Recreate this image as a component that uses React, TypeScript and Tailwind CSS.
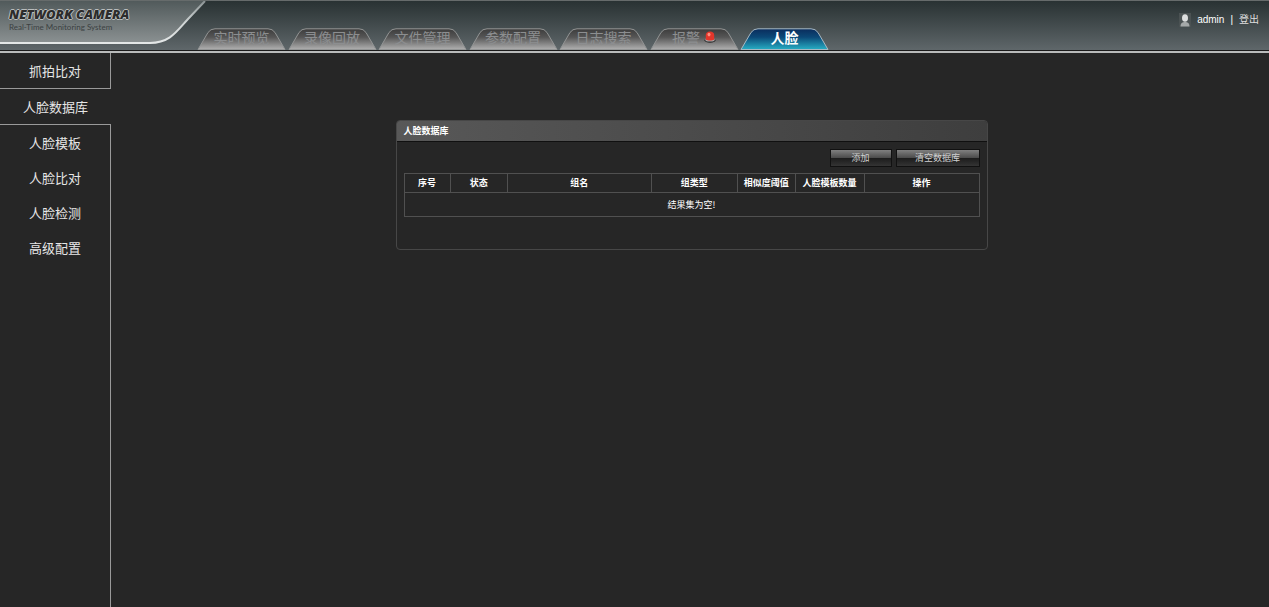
import { useState } from "react";

type MenuId = "capture" | "database" | "template" | "compare" | "detect" | "advanced";

const TABS = [
  { id: "live", label: "实时预览" },
  { id: "playback", label: "录像回放" },
  { id: "files", label: "文件管理" },
  { id: "config", label: "参数配置" },
  { id: "log", label: "日志搜索" },
  { id: "alarm", label: "报警" },
  { id: "face", label: "人脸" },
];

const MENU: { id: MenuId; label: string }[] = [
  { id: "capture", label: "抓拍比对" },
  { id: "database", label: "人脸数据库" },
  { id: "template", label: "人脸模板" },
  { id: "compare", label: "人脸比对" },
  { id: "detect", label: "人脸检测" },
  { id: "advanced", label: "高级配置" },
];

const COLUMNS = [
  { label: "序号", width: "w-[8%]" },
  { label: "状态", width: "w-[10%]" },
  { label: "组名", width: "w-[25%]" },
  { label: "组类型", width: "w-[15%]" },
  { label: "相似度阈值", width: "w-[10%]" },
  { label: "人脸模板数量", width: "w-[12%]" },
  { label: "操作", width: "w-[20%]" },
];

function Logo() {
  return (
    <div className="grid w-[206px] shrink-0">
      <svg viewBox="0 0 206 49" className="col-start-1 row-start-1 h-[49px] w-[206px]" aria-hidden="true">
        <defs>
          <linearGradient id="logo-fill" x1="0" y1="0" x2="0" y2="1">
            <stop offset="0" stopColor="#515a5b" />
            <stop offset="1" stopColor="#8b9192" />
          </linearGradient>
          <linearGradient id="logo-edge" x1="0" y1="1" x2="0" y2="0">
            <stop offset="0" stopColor="#e4e7e7" />
            <stop offset="0.5" stopColor="#cfd4d4" />
            <stop offset="1" stopColor="#8b9394" />
          </linearGradient>
        </defs>
        <path d="M0 0H205L188 18C176 31 170 42 150 42H0Z" fill="url(#logo-fill)" />
        <path d="M0 42H150C170 42 177 30 188 18L205 0" fill="none" stroke="url(#logo-edge)" strokeWidth="2" />
      </svg>
      <div className="col-start-1 row-start-1 pt-[6px] pl-[9px]">
        <div className="font-['Open_Sans',sans-serif] text-[13px] leading-[14px] font-extrabold italic text-[#2c2c2c] [text-shadow:1px_0_#b9bdbd,-1px_0_#b9bdbd,0_1px_#b9bdbd,0_-1px_#b9bdbd]">
          NETWORK CAMERA
        </div>
        <div className="font-['Lato',sans-serif] text-[8px] leading-3 text-[#3b4142]">Real-Time Monitoring System</div>
      </div>
    </div>
  );
}

function TabShape({ active }: { active: boolean }) {
  return (
    <svg viewBox="0 0 89 22" className="col-start-1 row-start-1 h-[22px] w-[89px]" aria-hidden="true">
      <defs>
        <linearGradient id="tab-on" x1="0" y1="0" x2="0" y2="1">
          <stop offset="0" stopColor="#0a2c5c" />
          <stop offset="0.4" stopColor="#0b4877" />
          <stop offset="1" stopColor="#27aec4" />
        </linearGradient>
        <linearGradient id="tab-off" x1="0" y1="0" x2="0" y2="1">
          <stop offset="0" stopColor="#3c3c3c" />
          <stop offset="0.4" stopColor="#555555" />
          <stop offset="1" stopColor="#b0b0b0" />
        </linearGradient>
      </defs>
      <path
        d="M1 21.5L11 4.5Q13.5 .8 18 .8H71Q75.5 .8 78 4.5L88 21.5Z"
        fill={active ? "url(#tab-on)" : "url(#tab-off)"}
        stroke={active ? "#a9b9c3" : "#939595"}
      />
    </svg>
  );
}

function AlarmIcon() {
  return (
    <svg viewBox="0 0 12 12" className="h-3 w-3" aria-hidden="true">
      <ellipse cx="6" cy="9.3" rx="5.5" ry="2.4" fill="#2b2b2b" />
      <ellipse cx="6" cy="8.7" rx="4.8" ry="1.9" fill="#a9a9a9" />
      <path d="M1.8 8.5V4.2C1.800 1.800 3.600.6 6 .6S10.200 1.800 10.200 4.200V8.500C8.500 9.800 3.500 9.800 1.800 8.500Z" fill="#e3362b" />
      <ellipse cx="5" cy="3.6" rx="1.5" ry="1.8" fill="#ff8f80" />
    </svg>
  );
}

function UserIcon() {
  return (
    <svg viewBox="0 0 12 14" className="h-[14px] w-3" aria-hidden="true">
      <rect width="12" height="14" fill="#4b5253" />
      <path d="M1.500 13.500C1.500 10 3.500 9 6 9S10.500 10 10.500 13.500Z" fill="#a5a9a9" />
      <ellipse cx="6" cy="5" rx="3" ry="3.8" fill="#dcdede" />
    </svg>
  );
}

function Header() {
  const [activeTab, setActiveTab] = useState("face");

  return (
    <header className="border-b-2 border-[#b9bbbb]">
      <div className="flex h-[51px] items-stretch border-t border-b border-t-[#666b6b] border-b-[#1a1a1a] bg-linear-to-b from-[#293233] to-[#5f676a]">
        <Logo />
        <nav className="-ml-[9px] flex w-[632px] shrink-0 items-end justify-between">
          {TABS.map((t) => (
            <button key={t.id} onClick={() => setActiveTab(t.id)} className="grid h-[22px] cursor-pointer">
              <TabShape active={activeTab === t.id} />
              <span
                className={`col-start-1 row-start-1 flex h-[18px] items-center justify-center gap-1 text-[14px] leading-[18px] ${
                  activeTab === t.id ? "font-bold text-white" : "text-[#8c8e90]"
                }`}
              >
                {t.label}
                {t.id === "alarm" && <AlarmIcon />}
              </span>
            </button>
          ))}
        </nav>
        <div className="ml-auto flex items-center gap-[6px] pr-[10px] pb-[12px] font-['Liberation_Sans','Noto_Sans_CJK_SC',sans-serif] text-[10px] leading-4 whitespace-nowrap text-white">
          <UserIcon />
          <span>admin</span>
          <span>|</span>
          <a href="#logout" className="text-[#dedede]">登出</a>
        </div>
      </div>
    </header>
  );
}

function Sidebar() {
  const [activeItem, setActiveItem] = useState<MenuId>("database");

  return (
    <nav className="flex w-[111px] shrink-0 flex-col">
      {MENU.map((m) => (
        <button
          key={m.id}
          onClick={() => setActiveItem(m.id)}
          className={`cursor-pointer text-center text-[13px] text-[#e6e6e6] ${
            activeItem === m.id ? "h-[37px] border-y border-[#9a9a9a]" : "h-[35px] border-r border-[#9a9a9a]"
          }`}
        >
          {m.label}
        </button>
      ))}
      <div className="flex-1 border-r border-[#9a9a9a]" />
    </nav>
  );
}

function ToolButton({ label, className }: { label: string; className: string }) {
  return (
    <button
      className={`h-[18px] cursor-pointer border border-[#111111] bg-[linear-gradient(#808080,#4a4a4a_50%,#1c1c1c_51%,#343434)] text-[9px] leading-4 text-[#d0d0d0] ${className}`}
    >
      {label}
    </button>
  );
}

function GroupTable() {
  return (
    <table className="w-full table-fixed border-collapse text-center text-[9px] leading-3 text-white">
      <thead>
        <tr className="h-[19px]">
          {COLUMNS.map((c) => (
            <th key={c.label} className={`border border-[#505050] p-0 font-bold whitespace-nowrap ${c.width}`}>
              {c.label}
            </th>
          ))}
        </tr>
      </thead>
      <tbody>
        <tr className="h-[24px]">
          <td colSpan={COLUMNS.length} className="border border-[#505050] p-0">
            结果集为空!
          </td>
        </tr>
      </tbody>
    </table>
  );
}

export default function App() {
  return (
    <div className="flex min-h-screen flex-col bg-[#262626] font-['Noto_Sans_CJK_SC',sans-serif]">
      <Header />
      <div className="flex flex-1">
        <Sidebar />
        <main className="flex flex-1 items-start justify-center pt-[67px] pl-[3px]">
          <section className="w-full max-w-[592px] overflow-hidden rounded-[4px] border border-[#474747] pb-8">
            <h1 className="-mx-px -mt-px h-[22px] border-b border-[#101010] bg-linear-to-r from-[#585858] to-[#3e3e3e] pl-2 text-[9px] leading-[21px] font-bold text-white">
              人脸数据库
            </h1>
            <div className="flex flex-col gap-[6px] px-[7px] pt-[7px]">
              <div className="flex justify-end gap-1">
                <ToolButton label="添加" className="w-[62px]" />
                <ToolButton label="清空数据库" className="w-[84px]" />
              </div>
              <GroupTable />
            </div>
          </section>
        </main>
      </div>
    </div>
  );
}
